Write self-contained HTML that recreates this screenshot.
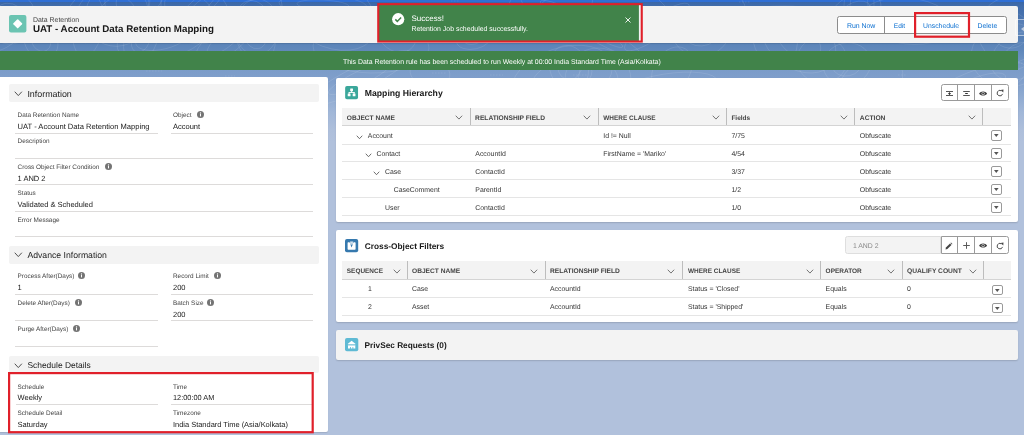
<!DOCTYPE html>
<html lang="en"><head><meta charset="utf-8"><title>UAT - Account Data Retention Mapping</title><style>
html,body{margin:0;padding:0}
body{width:1024px;height:435px;overflow:hidden;position:relative;font-family:"Liberation Sans",sans-serif;color:#181818;
background:linear-gradient(to bottom,#2f6fd6 0,#2f6fd6 1.8px,#3b67a7 2.2px,#416cab 6px,#5a83b8 42px,#6189bc 51px,#7b9cc9 70px,#809fcb 80px,#8eaad1 95px,#a1b7d8 112px,#aebfdb 130px,#b1c1dc 142px,#b1c1dc 100%);}
#app{position:absolute;left:0;top:0;width:1024px;height:435px;will-change:transform;text-rendering:geometricPrecision}
.t{position:absolute;white-space:pre;line-height:12px;height:12px}
.hl{position:absolute}
.ic{position:absolute;display:block;overflow:visible}
</style></head>
<body>
<div id="app">
<svg class="ic" style="left:0;top:0" width="1024" height="130" viewBox="0 0 1024 130"><g fill="none" stroke="rgba(255,255,255,.14)" stroke-width=".7"><ellipse cx="323" cy="5" rx="44" ry="10" transform="rotate(3 323 5)"/><ellipse cx="323" cy="5" rx="26" ry="5" transform="rotate(3 323 5)"/><ellipse cx="41" cy="41" rx="16" ry="19" transform="rotate(-34 41 41)"/><ellipse cx="41" cy="41" rx="9" ry="11" transform="rotate(-34 41 41)"/><ellipse cx="430" cy="73" rx="20" ry="14" transform="rotate(10 430 73)"/><ellipse cx="592" cy="30" rx="59" ry="9" transform="rotate(29 592 30)"/><ellipse cx="592" cy="30" rx="35" ry="5" transform="rotate(29 592 30)"/><ellipse cx="133" cy="2" rx="28" ry="29" transform="rotate(-26 133 2)"/><ellipse cx="133" cy="2" rx="17" ry="16" transform="rotate(-26 133 2)"/><ellipse cx="657" cy="27" rx="39" ry="10" transform="rotate(-35 657 27)"/><ellipse cx="657" cy="27" rx="24" ry="5" transform="rotate(-35 657 27)"/><ellipse cx="701" cy="33" rx="28" ry="23" transform="rotate(-4 701 33)"/><ellipse cx="701" cy="33" rx="17" ry="13" transform="rotate(-4 701 33)"/><ellipse cx="822" cy="60" rx="25" ry="23" transform="rotate(2 822 60)"/><ellipse cx="753" cy="19" rx="59" ry="11" transform="rotate(-7 753 19)"/><ellipse cx="141" cy="39" rx="16" ry="25" transform="rotate(21 141 39)"/><ellipse cx="141" cy="39" rx="9" ry="14" transform="rotate(21 141 39)"/><ellipse cx="908" cy="21" rx="46" ry="23" transform="rotate(6 908 21)"/><ellipse cx="908" cy="21" rx="28" ry="13" transform="rotate(6 908 21)"/><ellipse cx="870" cy="84" rx="36" ry="25" transform="rotate(-35 870 84)"/><ellipse cx="666" cy="89" rx="52" ry="15" transform="rotate(-9 666 89)"/><ellipse cx="4" cy="36" rx="22" ry="11" transform="rotate(-35 4 36)"/><ellipse cx="117" cy="15" rx="32" ry="31" transform="rotate(-34 117 15)"/><ellipse cx="117" cy="15" rx="19" ry="17" transform="rotate(-34 117 15)"/><ellipse cx="562" cy="78" rx="52" ry="30" transform="rotate(-18 562 78)"/><ellipse cx="562" cy="78" rx="31" ry="17" transform="rotate(-18 562 78)"/><ellipse cx="360" cy="78" rx="58" ry="12" transform="rotate(-26 360 78)"/><ellipse cx="360" cy="78" rx="35" ry="7" transform="rotate(-26 360 78)"/><ellipse cx="227" cy="38" rx="41" ry="15" transform="rotate(-40 227 38)"/><ellipse cx="227" cy="38" rx="25" ry="8" transform="rotate(-40 227 38)"/><ellipse cx="371" cy="47" rx="58" ry="26" transform="rotate(1 371 47)"/><ellipse cx="697" cy="-5" rx="55" ry="28" transform="rotate(30 697 -5)"/><ellipse cx="396" cy="30" rx="19" ry="24" transform="rotate(-35 396 30)"/><ellipse cx="396" cy="30" rx="11" ry="13" transform="rotate(-35 396 30)"/><ellipse cx="201" cy="6" rx="30" ry="9" transform="rotate(-40 201 6)"/><ellipse cx="201" cy="6" rx="18" ry="5" transform="rotate(-40 201 6)"/><ellipse cx="88" cy="26" rx="15" ry="31" transform="rotate(9 88 26)"/><ellipse cx="88" cy="26" rx="9" ry="17" transform="rotate(9 88 26)"/><ellipse cx="247" cy="25" rx="31" ry="11" transform="rotate(28 247 25)"/><ellipse cx="474" cy="38" rx="18" ry="11" transform="rotate(-13 474 38)"/><ellipse cx="474" cy="38" rx="11" ry="6" transform="rotate(-13 474 38)"/><ellipse cx="859" cy="6" rx="15" ry="33" transform="rotate(2 859 6)"/><ellipse cx="859" cy="6" rx="9" ry="18" transform="rotate(2 859 6)"/><ellipse cx="556" cy="-7" rx="38" ry="33" transform="rotate(29 556 -7)"/><ellipse cx="257" cy="27" rx="22" ry="28" transform="rotate(3 257 27)"/><ellipse cx="329" cy="12" rx="51" ry="34" transform="rotate(28 329 12)"/><ellipse cx="847" cy="64" rx="24" ry="21" transform="rotate(-12 847 64)"/><ellipse cx="847" cy="64" rx="15" ry="12" transform="rotate(-12 847 64)"/><ellipse cx="10" cy="18" rx="26" ry="26" transform="rotate(37 10 18)"/><ellipse cx="10" cy="18" rx="16" ry="14" transform="rotate(37 10 18)"/><ellipse cx="973" cy="89" rx="58" ry="17" transform="rotate(-22 973 89)"/><ellipse cx="973" cy="89" rx="35" ry="10" transform="rotate(-22 973 89)"/><ellipse cx="189" cy="10" rx="43" ry="31" transform="rotate(27 189 10)"/><ellipse cx="189" cy="10" rx="26" ry="17" transform="rotate(27 189 10)"/><ellipse cx="672" cy="70" rx="18" ry="25" transform="rotate(33 672 70)"/><ellipse cx="775" cy="38" rx="22" ry="29" transform="rotate(-13 775 38)"/><ellipse cx="1010" cy="30" rx="32" ry="33" transform="rotate(18 1010 30)"/><ellipse cx="1010" cy="30" rx="19" ry="18" transform="rotate(18 1010 30)"/><ellipse cx="115" cy="5" rx="56" ry="29" transform="rotate(-28 115 5)"/><ellipse cx="1019" cy="56" rx="30" ry="22" transform="rotate(-30 1019 56)"/><ellipse cx="1019" cy="56" rx="18" ry="12" transform="rotate(-30 1019 56)"/><ellipse cx="1009" cy="55" rx="38" ry="32" transform="rotate(-5 1009 55)"/><ellipse cx="856" cy="11" rx="26" ry="16" transform="rotate(-21 856 11)"/><ellipse cx="856" cy="11" rx="15" ry="9" transform="rotate(-21 856 11)"/><ellipse cx="255" cy="32" rx="20" ry="32" transform="rotate(-12 255 32)"/><ellipse cx="255" cy="32" rx="12" ry="17" transform="rotate(-12 255 32)"/><ellipse cx="598" cy="80" rx="33" ry="32" transform="rotate(0 598 80)"/><ellipse cx="598" cy="80" rx="20" ry="18" transform="rotate(0 598 80)"/><ellipse cx="535" cy="-8" rx="34" ry="13" transform="rotate(-40 535 -8)"/><ellipse cx="163" cy="37" rx="47" ry="22" transform="rotate(-14 163 37)"/><ellipse cx="163" cy="37" rx="28" ry="12" transform="rotate(-14 163 37)"/><ellipse cx="569" cy="68" rx="19" ry="23" transform="rotate(-20 569 68)"/><ellipse cx="569" cy="68" rx="11" ry="12" transform="rotate(-20 569 68)"/><ellipse cx="799" cy="41" rx="40" ry="28" transform="rotate(33 799 41)"/><ellipse cx="799" cy="41" rx="24" ry="15" transform="rotate(33 799 41)"/><path d="M627 40 h11" stroke-dasharray="1.5 1.5"/><path d="M709 36 h11" stroke-dasharray="1.5 1.5"/><path d="M490 75 h13" stroke-dasharray="1.5 1.5"/><path d="M898 75 h9" stroke-dasharray="1.5 1.5"/><path d="M573 75 h14" stroke-dasharray="1.5 1.5"/><path d="M140 10 h10" stroke-dasharray="1.5 1.5"/><path d="M74 19 h7" stroke-dasharray="1.5 1.5"/><path d="M686 63 h15" stroke-dasharray="1.5 1.5"/><path d="M158 57 h13" stroke-dasharray="1.5 1.5"/><path d="M146 71 h16" stroke-dasharray="1.5 1.5"/><path d="M225 76 h10" stroke-dasharray="1.5 1.5"/><path d="M499 79 h14" stroke-dasharray="1.5 1.5"/><path d="M165 35 h11" stroke-dasharray="1.5 1.5"/><path d="M347 16 h9" stroke-dasharray="1.5 1.5"/><path d="M739 2 h12" stroke-dasharray="1.5 1.5"/><path d="M451 1 h9" stroke-dasharray="1.5 1.5"/><path d="M639 41 h7" stroke-dasharray="1.5 1.5"/><path d="M1009 63 h16" stroke-dasharray="1.5 1.5"/><path d="M107 21 h6" stroke-dasharray="1.5 1.5"/><path d="M798 22 h7" stroke-dasharray="1.5 1.5"/><path d="M432 73 h14" stroke-dasharray="1.5 1.5"/><path d="M265 12 h15" stroke-dasharray="1.5 1.5"/><path d="M584 56 h7" stroke-dasharray="1.5 1.5"/><path d="M59 55 h10" stroke-dasharray="1.5 1.5"/></g></svg>
<header id="hdr">
<div class="" style="position:absolute;left:0.00px;top:6.00px;width:1018.00px;height:36.60px;background:#f3f3f3;border-radius:0 2px 2px 0;box-shadow:0 1px 1px rgba(0,0,0,.12);"></div>
<svg class="ic" style="left:8.8px;top:15px" width="17.4" height="17.4" viewBox="0 0 17.4 17.4"><rect width="17.4" height="17.4" rx="2" fill="#6bc4b2"/><rect x="-3.45" y="-3.45" width="6.9" height="6.9" rx="0.8" transform="translate(8.7 8.8) rotate(45)" fill="#fff"/></svg>
<div class="t" style="top:15px;font-size:6.93px;left:33.00px;color:#444444;">Data Retention</div>
<div class="t" style="top:24px;font-size:9.75px;left:33.00px;font-weight:700;">UAT - Account Data Retention Mapping</div>
<div class="" style="position:absolute;left:837.25px;top:16.25px;width:169.50px;height:17.25px;box-sizing:border-box;border:1px solid #8c8c8c;border-radius:2.5px;background:#fff;"></div>
<div class="hl" style="left:883.90px;top:16.75px;width:1px;height:16.25px;background:#8c8c8c"></div>
<div class="hl" style="left:914.10px;top:16.75px;width:1px;height:16.25px;background:#8c8c8c"></div>
<div class="hl" style="left:968.30px;top:16.75px;width:1px;height:16.25px;background:#8c8c8c"></div>
<div class="t" style="top:21px;font-size:6.93px;left:846.90px;color:#0b6fd0;">Run Now</div>
<div class="t" style="top:21px;font-size:6.6px;left:893.75px;color:#0b6fd0;">Edit</div>
<div class="t" style="top:21px;font-size:6.82px;left:923.10px;color:#0b6fd0;">Unschedule</div>
<div class="t" style="top:21px;font-size:6.83px;left:977.50px;color:#0b6fd0;">Delete</div>
<svg class="ic" style="left:913.60px;top:11.60px" width="56.10" height="25.80" viewBox="0 0 56.10 25.80"><rect x="1.10" y="1.10" width="53.90" height="23.60" fill="none" stroke="#e0202a" stroke-width="2.2"/></svg>
<div class="" style="position:absolute;left:1015.40px;top:19.20px;width:12.00px;height:16.40px;box-sizing:border-box;border:1px solid rgba(255,255,255,.5);border-radius:2px;background:rgba(255,255,255,.07);"></div>
<svg class="ic" style="left:1020.6px;top:25.6px" width="4" height="6" viewBox="0 0 4 6"><path d="M0 3 L4 0 V6 Z" fill="rgba(205,214,228,.85)"/></svg>
</header>
<section id="toast">
<svg class="ic" style="left:377px;top:3px" width="266" height="40" viewBox="0 0 266 40"><rect x="1" y="1" width="264" height="37.6" fill="#f3f3f3"/><rect x="1" y="1" width="260.9" height="37.6" fill="#41834a"/><rect x="1.25" y="1.15" width="263.5" height="37.4" fill="none" stroke="#e0202a" stroke-width="2.1"/></svg>
<svg class="ic" style="left:391.8px;top:12.6px" width="12.4" height="12.4" viewBox="0 0 12.4 12.4"><circle cx="6.2" cy="6.2" r="6.1" fill="#fff"/><path d="M3.3 6.4 L5.3 8.4 L9.1 4.4" fill="none" stroke="#41834a" stroke-width="1.5"/></svg>
<div class="t" style="top:13px;font-size:8.0px;left:411.40px;color:#fff;">Success!</div>
<div class="t" style="top:24px;font-size:6.92px;left:411.40px;color:#fff;">Retention Job scheduled successfully.</div>
<svg class="ic" style="left:625.4px;top:16.6px" width="6" height="6" viewBox="0 0 6 6"><path d="M0.5 0.5 L5.5 5.5 M5.5 0.5 L0.5 5.5" stroke="#fff" stroke-width="0.9" fill="none"/></svg>
</section>
<section id="banner">
<div class="" style="position:absolute;left:0.00px;top:51.25px;width:1018.00px;height:19.00px;background:#41834a;"></div>
<div class="t" style="top:57px;font-size:6.92px;left:343.00px;color:#fff;">This Data Retention rule has been scheduled to run Weekly at 00:00 India Standard Time (Asia/Kolkata)</div>
</section>
<aside id="left">
<div class="" style="position:absolute;left:0.00px;top:77.25px;width:328.30px;height:354.50px;background:#fff;border-radius:0 2px 2px 0;box-shadow:0 1px 1px rgba(0,0,0,.10);"></div>
<div class="" style="position:absolute;left:9.20px;top:84.20px;width:309.80px;height:17.60px;background:#f3f3f3;border-radius:2px;"></div>
<svg class="ic" style="left:14.20px;top:90.90px" width="8.60" height="5.60" viewBox="-1 -1 8.60 5.60"><path d="M0 0 L3.30 3.60 L6.60 0" fill="none" stroke="#505050" stroke-width="1.0" stroke-linecap="round" stroke-linejoin="round"/></svg>
<div class="t" style="top:88px;font-size:8.9px;left:27.40px;color:#222;">Information</div>
<div class="" style="position:absolute;left:9.20px;top:246.20px;width:309.80px;height:17.60px;background:#f3f3f3;border-radius:2px;"></div>
<svg class="ic" style="left:14.20px;top:252.30px" width="8.60" height="5.60" viewBox="-1 -1 8.60 5.60"><path d="M0 0 L3.30 3.60 L6.60 0" fill="none" stroke="#505050" stroke-width="1.0" stroke-linecap="round" stroke-linejoin="round"/></svg>
<div class="t" style="top:249px;font-size:8.68px;left:27.40px;color:#222;">Advance Information</div>
<div class="" style="position:absolute;left:9.20px;top:356.20px;width:309.80px;height:16.90px;background:#f3f3f3;border-radius:2px;"></div>
<svg class="ic" style="left:14.20px;top:362.80px" width="8.60" height="5.60" viewBox="-1 -1 8.60 5.60"><path d="M0 0 L3.30 3.60 L6.60 0" fill="none" stroke="#505050" stroke-width="1.0" stroke-linecap="round" stroke-linejoin="round"/></svg>
<div class="t" style="top:359px;font-size:8.45px;left:27.40px;color:#222;">Schedule Details</div>
<div class="t" style="top:110px;font-size:6.4px;left:17.60px;color:#444444;">Data Retention Name</div>
<div class="t" style="top:121px;font-size:7.58px;left:17.60px;">UAT - Account Data Retention Mapping</div>
<div class="hl" style="left:15.00px;top:133.00px;width:143.00px;height:1px;background:#dddbda"></div>
<div class="t" style="top:110px;font-size:6.4px;left:173.00px;color:#444444;">Object</div>
<svg class="ic" style="left:197.30px;top:111.10px" width="7.00" height="7.00" viewBox="0 0 20 20"><circle cx="10" cy="10" r="10" fill="#747474"/><rect x="8.6" y="8.2" width="2.8" height="7.2" fill="#fff"/><circle cx="10" cy="5.4" r="1.8" fill="#fff"/></svg>
<div class="t" style="top:121px;font-size:7.5px;left:173.00px;">Account</div>
<div class="hl" style="left:171.00px;top:133.00px;width:142.00px;height:1px;background:#dddbda"></div>
<div class="t" style="top:136px;font-size:6.4px;left:17.60px;color:#444444;">Description</div>
<div class="hl" style="left:15.00px;top:157.80px;width:298.00px;height:1px;background:#dddbda"></div>
<div class="t" style="top:162px;font-size:6.4px;left:17.60px;color:#444444;">Cross Object Filter Condition</div>
<svg class="ic" style="left:104.90px;top:162.50px" width="7.00" height="7.00" viewBox="0 0 20 20"><circle cx="10" cy="10" r="10" fill="#747474"/><rect x="8.6" y="8.2" width="2.8" height="7.2" fill="#fff"/><circle cx="10" cy="5.4" r="1.8" fill="#fff"/></svg>
<div class="t" style="top:173px;font-size:7.5px;left:17.60px;">1 AND 2</div>
<div class="hl" style="left:15.00px;top:183.80px;width:298.00px;height:1px;background:#dddbda"></div>
<div class="t" style="top:188px;font-size:6.4px;left:17.60px;color:#444444;">Status</div>
<div class="t" style="top:199px;font-size:7.5px;left:17.60px;">Validated &amp; Scheduled</div>
<div class="hl" style="left:15.00px;top:210.90px;width:298.00px;height:1px;background:#dddbda"></div>
<div class="t" style="top:215px;font-size:6.4px;left:17.60px;color:#444444;">Error Message</div>
<div class="hl" style="left:15.00px;top:236.00px;width:298.00px;height:1px;background:#dddbda"></div>
<div class="t" style="top:271px;font-size:6.4px;left:17.60px;color:#444444;">Process After(Days)</div>
<svg class="ic" style="left:78.00px;top:272.30px" width="7.00" height="7.00" viewBox="0 0 20 20"><circle cx="10" cy="10" r="10" fill="#747474"/><rect x="8.6" y="8.2" width="2.8" height="7.2" fill="#fff"/><circle cx="10" cy="5.4" r="1.8" fill="#fff"/></svg>
<div class="t" style="top:282px;font-size:7.5px;left:17.60px;">1</div>
<div class="hl" style="left:15.00px;top:293.60px;width:143.00px;height:1px;background:#dddbda"></div>
<div class="t" style="top:271px;font-size:6.4px;left:173.00px;color:#444444;">Record Limit</div>
<svg class="ic" style="left:214.00px;top:272.30px" width="7.00" height="7.00" viewBox="0 0 20 20"><circle cx="10" cy="10" r="10" fill="#747474"/><rect x="8.6" y="8.2" width="2.8" height="7.2" fill="#fff"/><circle cx="10" cy="5.4" r="1.8" fill="#fff"/></svg>
<div class="t" style="top:282px;font-size:7.5px;left:173.00px;">200</div>
<div class="hl" style="left:171.00px;top:293.60px;width:142.00px;height:1px;background:#dddbda"></div>
<div class="t" style="top:298px;font-size:6.4px;left:17.60px;color:#444444;">Delete After(Days)</div>
<svg class="ic" style="left:74.60px;top:298.70px" width="7.00" height="7.00" viewBox="0 0 20 20"><circle cx="10" cy="10" r="10" fill="#747474"/><rect x="8.6" y="8.2" width="2.8" height="7.2" fill="#fff"/><circle cx="10" cy="5.4" r="1.8" fill="#fff"/></svg>
<div class="hl" style="left:15.00px;top:319.80px;width:143.00px;height:1px;background:#dddbda"></div>
<div class="t" style="top:298px;font-size:6.4px;left:173.00px;color:#444444;">Batch Size</div>
<svg class="ic" style="left:207.00px;top:298.70px" width="7.00" height="7.00" viewBox="0 0 20 20"><circle cx="10" cy="10" r="10" fill="#747474"/><rect x="8.6" y="8.2" width="2.8" height="7.2" fill="#fff"/><circle cx="10" cy="5.4" r="1.8" fill="#fff"/></svg>
<div class="t" style="top:309px;font-size:7.5px;left:173.00px;">200</div>
<div class="hl" style="left:171.00px;top:319.80px;width:142.00px;height:1px;background:#dddbda"></div>
<div class="t" style="top:324px;font-size:6.4px;left:17.60px;color:#444444;">Purge After(Days)</div>
<svg class="ic" style="left:72.90px;top:324.70px" width="7.00" height="7.00" viewBox="0 0 20 20"><circle cx="10" cy="10" r="10" fill="#747474"/><rect x="8.6" y="8.2" width="2.8" height="7.2" fill="#fff"/><circle cx="10" cy="5.4" r="1.8" fill="#fff"/></svg>
<div class="hl" style="left:15.00px;top:345.70px;width:143.00px;height:1px;background:#dddbda"></div>
<div class="t" style="top:382px;font-size:6.4px;left:17.60px;color:#444444;">Schedule</div>
<div class="t" style="top:392px;font-size:7.5px;left:17.60px;">Weekly</div>
<div class="hl" style="left:15.80px;top:404.10px;width:141.80px;height:1px;background:#dddbda"></div>
<div class="t" style="top:382px;font-size:6.4px;left:173.00px;color:#444444;">Time</div>
<div class="t" style="top:392px;font-size:7.39px;left:173.00px;">12:00:00 AM</div>
<div class="hl" style="left:171.00px;top:404.10px;width:142.00px;height:1px;background:#dddbda"></div>
<div class="t" style="top:408px;font-size:6.4px;left:17.60px;color:#444444;">Schedule Detail</div>
<div class="t" style="top:419px;font-size:7.5px;left:17.60px;">Saturday</div>
<div class="t" style="top:408px;font-size:6.4px;left:173.00px;color:#444444;">Timezone</div>
<div class="t" style="top:419px;font-size:7.44px;left:173.00px;">India Standard Time (Asia/Kolkata)</div>
<svg class="ic" style="left:7.50px;top:372.30px" width="305.80" height="61.30" viewBox="0 0 305.80 61.30"><rect x="1.10" y="1.10" width="303.60" height="59.10" fill="none" stroke="#e0202a" stroke-width="2.2"/></svg>
</aside>
<section id="mapping">
<div class="" style="position:absolute;left:336.00px;top:77.50px;width:682.00px;height:144.60px;background:#fff;border-radius:2px;box-shadow:0 1px 1.5px rgba(0,0,0,.15);"></div>
<svg class="ic" style="left:344.6px;top:86px" width="13.2" height="13.2" viewBox="0 0 13 13.3"><rect width="13" height="13.3" rx="1.8" fill="#3ba79b"/><g fill="#fff"><rect x="5.1" y="2.6" width="2.8" height="2.6" rx=".3"/><rect x="2.6" y="7.6" width="2.8" height="2.8" rx=".3"/><rect x="7.6" y="7.6" width="2.8" height="2.8" rx=".3"/><rect x="6.1" y="5" width=".9" height="1.6"/><rect x="3.6" y="6.1" width="5.9" height=".9"/><rect x="3.6" y="6.1" width=".9" height="1.8"/><rect x="8.6" y="6.1" width=".9" height="1.8"/></g></svg>
<div class="t" style="top:87px;font-size:8.66px;left:364.80px;font-weight:700;">Mapping Hierarchy</div>
<div class="" style="position:absolute;left:941.00px;top:84.10px;width:67.80px;height:17.30px;box-sizing:border-box;border:1px solid #9a9a9a;border-radius:2.5px;background:#fff;"></div><div class="hl" style="left:957.00px;top:84.60px;width:1px;height:16.30px;background:#9a9a9a"></div><div class="hl" style="left:974.00px;top:84.60px;width:1px;height:16.30px;background:#9a9a9a"></div><div class="hl" style="left:991.00px;top:84.60px;width:1px;height:16.30px;background:#9a9a9a"></div><svg class="ic" style="left:945px;top:89px" width="9" height="9" viewBox="0 0 9 9"><path d="M1 2.5 H8 M1 6.5 H8" stroke="#555" stroke-width="1"/><path d="M4.5 3.3 V5.9 M3.2 4.6 H5.8" stroke="#333" stroke-width="0.95"/></svg><svg class="ic" style="left:962px;top:89px" width="9" height="9" viewBox="0 0 9 9"><path d="M1.2 2.5 H7.8 M1.2 6.5 H7.8" stroke="#555" stroke-width="1"/><path d="M3.2 4.5 H5.8" stroke="#333" stroke-width="1"/></svg><svg class="ic" style="left:979.10px;top:90.70px" width="8.2" height="5" viewBox="0 0 8.2 5"><path d="M0.1 2.5 C1.5 -0.3 6.7 -0.3 8.1 2.5 C6.7 5.3 1.5 5.3 0.1 2.5 Z" fill="#3e3e3e"/><circle cx="4.1" cy="2.5" r="1.55" fill="#e8e8e8"/><circle cx="4.1" cy="2.5" r="0.95" fill="#3e3e3e"/></svg><svg class="ic" style="left:996.00px;top:89.20px" width="8" height="8" viewBox="0 0 8 8"><path d="M5.3 1.75 A2.75 2.75 0 1 0 6.55 4.9" fill="none" stroke="#444" stroke-width="0.95"/><path d="M4.6 0.9 L7.5 0.6 L7.3 3.6 Z" fill="#444"/></svg>
<div class="" style="position:absolute;left:342.10px;top:108.00px;width:668.90px;height:17.50px;background:#f3f3f3;"></div>
<div class="hl" style="left:342.10px;top:125.00px;width:668.90px;height:1.2px;background:#d4d4d4"></div>
<div class="hl" style="left:469.90px;top:108.00px;width:1px;height:17.40px;background:#bdbdbd"></div>
<div class="hl" style="left:598.10px;top:108.00px;width:1px;height:17.40px;background:#bdbdbd"></div>
<div class="hl" style="left:725.80px;top:108.00px;width:1px;height:17.40px;background:#bdbdbd"></div>
<div class="hl" style="left:853.90px;top:108.00px;width:1px;height:17.40px;background:#bdbdbd"></div>
<div class="hl" style="left:982.00px;top:108.00px;width:1px;height:17.40px;background:#bdbdbd"></div>
<div class="t" style="top:113px;font-size:6.62px;left:346.80px;font-weight:700;color:#444444;">OBJECT NAME</div>
<div class="t" style="top:113px;font-size:6.65px;left:475.10px;font-weight:700;color:#444444;">RELATIONSHIP FIELD</div>
<div class="t" style="top:113px;font-size:6.45px;left:603.30px;font-weight:700;color:#444444;">WHERE CLAUSE</div>
<div class="t" style="top:113px;font-size:6.51px;left:731.40px;font-weight:700;color:#444444;">Fields</div>
<div class="t" style="top:113px;font-size:6.7px;left:859.80px;font-weight:700;color:#444444;">ACTION</div>
<svg class="ic" style="left:455.45px;top:115.15px" width="7.90" height="5.10" viewBox="-1 -1 7.90 5.10"><path d="M0 0 L2.95 3.10 L5.90 0" fill="none" stroke="#666" stroke-width="0.9" stroke-linecap="round" stroke-linejoin="round"/></svg>
<svg class="ic" style="left:583.35px;top:115.15px" width="7.90" height="5.10" viewBox="-1 -1 7.90 5.10"><path d="M0 0 L2.95 3.10 L5.90 0" fill="none" stroke="#666" stroke-width="0.9" stroke-linecap="round" stroke-linejoin="round"/></svg>
<svg class="ic" style="left:711.85px;top:115.15px" width="7.90" height="5.10" viewBox="-1 -1 7.90 5.10"><path d="M0 0 L2.95 3.10 L5.90 0" fill="none" stroke="#666" stroke-width="0.9" stroke-linecap="round" stroke-linejoin="round"/></svg>
<svg class="ic" style="left:839.85px;top:115.15px" width="7.90" height="5.10" viewBox="-1 -1 7.90 5.10"><path d="M0 0 L2.95 3.10 L5.90 0" fill="none" stroke="#666" stroke-width="0.9" stroke-linecap="round" stroke-linejoin="round"/></svg>
<svg class="ic" style="left:967.95px;top:115.15px" width="7.90" height="5.10" viewBox="-1 -1 7.90 5.10"><path d="M0 0 L2.95 3.10 L5.90 0" fill="none" stroke="#666" stroke-width="0.9" stroke-linecap="round" stroke-linejoin="round"/></svg>
<svg class="ic" style="left:356.30px;top:134.55px" width="7.00" height="4.70" viewBox="-1 -1 7.00 4.70"><path d="M0 0 L2.50 2.70 L5.00 0" fill="none" stroke="#555" stroke-width="0.85" stroke-linecap="round" stroke-linejoin="round"/></svg>
<div class="t" style="top:131px;font-size:6.9px;left:367.80px;color:#333333;">Account</div>
<div class="t" style="top:131px;font-size:6.9px;left:603.30px;color:#333333;">Id != Null</div>
<div class="t" style="top:131px;font-size:6.9px;left:731.40px;color:#333333;">7/75</div>
<div class="t" style="top:131px;font-size:6.9px;left:859.80px;color:#333333;">Obfuscate</div>
<div class="hl" style="left:342.10px;top:143.80px;width:668.90px;height:1px;background:#e5e5e5"></div>
<div class="" style="position:absolute;left:991.00px;top:130.40px;width:11.00px;height:10.50px;box-sizing:border-box;border:1px solid #9a9a9a;border-radius:2px;background:#fff;"></div><svg class="ic" style="left:994.20px;top:134.30px" width="4.6" height="3" viewBox="0 0 4.6 3"><path d="M0 0 H4.6 L2.3 3 Z" fill="#555"/></svg>
<svg class="ic" style="left:364.50px;top:152.55px" width="7.00" height="4.70" viewBox="-1 -1 7.00 4.70"><path d="M0 0 L2.50 2.70 L5.00 0" fill="none" stroke="#555" stroke-width="0.85" stroke-linecap="round" stroke-linejoin="round"/></svg>
<div class="t" style="top:149px;font-size:6.9px;left:376.50px;color:#333333;">Contact</div>
<div class="t" style="top:149px;font-size:6.9px;left:475.30px;color:#333333;">AccountId</div>
<div class="t" style="top:149px;font-size:6.9px;left:603.30px;color:#333333;">FirstName = 'Mariko'</div>
<div class="t" style="top:149px;font-size:6.9px;left:731.40px;color:#333333;">4/54</div>
<div class="t" style="top:149px;font-size:6.9px;left:859.80px;color:#333333;">Obfuscate</div>
<div class="hl" style="left:342.10px;top:161.10px;width:668.90px;height:1px;background:#e5e5e5"></div>
<div class="" style="position:absolute;left:991.00px;top:148.30px;width:11.00px;height:10.50px;box-sizing:border-box;border:1px solid #9a9a9a;border-radius:2px;background:#fff;"></div><svg class="ic" style="left:994.20px;top:152.20px" width="4.6" height="3" viewBox="0 0 4.6 3"><path d="M0 0 H4.6 L2.3 3 Z" fill="#555"/></svg>
<svg class="ic" style="left:373.40px;top:170.55px" width="7.00" height="4.70" viewBox="-1 -1 7.00 4.70"><path d="M0 0 L2.50 2.70 L5.00 0" fill="none" stroke="#555" stroke-width="0.85" stroke-linecap="round" stroke-linejoin="round"/></svg>
<div class="t" style="top:167px;font-size:6.9px;left:385.00px;color:#333333;">Case</div>
<div class="t" style="top:167px;font-size:6.9px;left:475.30px;color:#333333;">ContactId</div>
<div class="t" style="top:167px;font-size:6.9px;left:731.40px;color:#333333;">3/37</div>
<div class="t" style="top:167px;font-size:6.9px;left:859.80px;color:#333333;">Obfuscate</div>
<div class="hl" style="left:342.10px;top:179.10px;width:668.90px;height:1px;background:#e5e5e5"></div>
<div class="" style="position:absolute;left:991.00px;top:166.20px;width:11.00px;height:10.50px;box-sizing:border-box;border:1px solid #9a9a9a;border-radius:2px;background:#fff;"></div><svg class="ic" style="left:994.20px;top:170.10px" width="4.6" height="3" viewBox="0 0 4.6 3"><path d="M0 0 H4.6 L2.3 3 Z" fill="#555"/></svg>
<div class="t" style="top:185px;font-size:6.9px;left:393.70px;color:#333333;">CaseComment</div>
<div class="t" style="top:185px;font-size:6.9px;left:475.30px;color:#333333;">ParentId</div>
<div class="t" style="top:185px;font-size:6.9px;left:731.40px;color:#333333;">1/2</div>
<div class="t" style="top:185px;font-size:6.9px;left:859.80px;color:#333333;">Obfuscate</div>
<div class="hl" style="left:342.10px;top:197.10px;width:668.90px;height:1px;background:#e5e5e5"></div>
<div class="" style="position:absolute;left:991.00px;top:184.10px;width:11.00px;height:10.50px;box-sizing:border-box;border:1px solid #9a9a9a;border-radius:2px;background:#fff;"></div><svg class="ic" style="left:994.20px;top:188.00px" width="4.6" height="3" viewBox="0 0 4.6 3"><path d="M0 0 H4.6 L2.3 3 Z" fill="#555"/></svg>
<div class="t" style="top:203px;font-size:6.9px;left:385.00px;color:#333333;">User</div>
<div class="t" style="top:203px;font-size:6.9px;left:475.30px;color:#333333;">ContactId</div>
<div class="t" style="top:203px;font-size:6.9px;left:731.40px;color:#333333;">1/0</div>
<div class="t" style="top:203px;font-size:6.9px;left:859.80px;color:#333333;">Obfuscate</div>
<div class="hl" style="left:342.10px;top:214.90px;width:668.90px;height:1px;background:#e5e5e5"></div>
<div class="" style="position:absolute;left:991.00px;top:202.00px;width:11.00px;height:10.50px;box-sizing:border-box;border:1px solid #9a9a9a;border-radius:2px;background:#fff;"></div><svg class="ic" style="left:994.20px;top:205.90px" width="4.6" height="3" viewBox="0 0 4.6 3"><path d="M0 0 H4.6 L2.3 3 Z" fill="#555"/></svg>
</section>
<section id="filters">
<div class="" style="position:absolute;left:336.00px;top:230.10px;width:682.00px;height:92.20px;background:#fff;border-radius:2px;box-shadow:0 1px 1.5px rgba(0,0,0,.15);"></div>
<svg class="ic" style="left:344.6px;top:239px" width="13.2" height="13.2" viewBox="0 0 13.2 13.2"><rect width="13.2" height="13.2" rx="1.9" fill="#3679ae"/><rect x="2.6" y="3.3" width="8" height="7.4" rx=".6" fill="#fff"/><rect x="4.9" y="2.3" width="3.4" height="1.8" rx=".5" fill="#fff" stroke="#3679ae" stroke-width=".55"/><path d="M5.1 5.6 H8.1 L7 6.9 V8.3 L6.2 7.9 V6.9 Z" fill="#3679ae"/></svg>
<div class="t" style="top:240px;font-size:8.3px;left:364.80px;font-weight:700;">Cross-Object Filters</div>
<div class="" style="position:absolute;left:845.40px;top:236.40px;width:95.60px;height:17.50px;box-sizing:border-box;border:1px solid #dedede;border-radius:2.5px 0 0 2.5px;background:#f3f3f3;"></div>
<div class="t" style="top:241px;font-size:6.9px;left:852.90px;color:#8a8a8a;">1 AND 2</div>
<div class="" style="position:absolute;left:941.00px;top:236.40px;width:67.80px;height:17.50px;box-sizing:border-box;border:1px solid #9a9a9a;border-radius:0 2.5px 2.5px 0;background:#fff;"></div><div class="hl" style="left:957.00px;top:236.90px;width:1px;height:16.50px;background:#9a9a9a"></div><div class="hl" style="left:974.00px;top:236.90px;width:1px;height:16.50px;background:#9a9a9a"></div><div class="hl" style="left:991.00px;top:236.90px;width:1px;height:16.50px;background:#9a9a9a"></div><svg class="ic" style="left:945.40px;top:241.60px" width="8" height="8" viewBox="0 0 8 8"><path d="M0.5 7.4 L0.95 5.5 L5.0 1.45 L6.45 2.9 L2.4 6.95 Z" fill="#444"/><path d="M5.45 1.0 L6.0 0.45 L7.45 1.9 L6.9 2.45 Z" fill="#444"/></svg><svg class="ic" style="left:962px;top:241px" width="9" height="9" viewBox="0 0 9 9"><path d="M4.5 1.2 V7.8 M1.2 4.5 H7.8" stroke="#5a5a5a" stroke-width="1"/></svg><svg class="ic" style="left:979.20px;top:243.10px" width="8.2" height="5" viewBox="0 0 8.2 5"><path d="M0.1 2.5 C1.5 -0.3 6.7 -0.3 8.1 2.5 C6.7 5.3 1.5 5.3 0.1 2.5 Z" fill="#3e3e3e"/><circle cx="4.1" cy="2.5" r="1.55" fill="#e8e8e8"/><circle cx="4.1" cy="2.5" r="0.95" fill="#3e3e3e"/></svg><svg class="ic" style="left:996.20px;top:241.60px" width="8" height="8" viewBox="0 0 8 8"><path d="M5.3 1.75 A2.75 2.75 0 1 0 6.55 4.9" fill="none" stroke="#444" stroke-width="0.95"/><path d="M4.6 0.9 L7.5 0.6 L7.3 3.6 Z" fill="#444"/></svg>
<div class="" style="position:absolute;left:342.10px;top:261.40px;width:668.90px;height:17.70px;background:#f3f3f3;"></div>
<div class="hl" style="left:342.10px;top:278.60px;width:668.90px;height:1.2px;background:#d4d4d4"></div>
<div class="hl" style="left:407.10px;top:261.40px;width:1px;height:17.60px;background:#bdbdbd"></div>
<div class="hl" style="left:544.50px;top:261.40px;width:1px;height:17.60px;background:#bdbdbd"></div>
<div class="hl" style="left:682.10px;top:261.40px;width:1px;height:17.60px;background:#bdbdbd"></div>
<div class="hl" style="left:820.20px;top:261.40px;width:1px;height:17.60px;background:#bdbdbd"></div>
<div class="hl" style="left:901.80px;top:261.40px;width:1px;height:17.60px;background:#bdbdbd"></div>
<div class="hl" style="left:982.80px;top:261.40px;width:1px;height:17.60px;background:#bdbdbd"></div>
<div class="t" style="top:266px;font-size:6.45px;left:346.80px;font-weight:700;color:#444444;">SEQUENCE</div>
<div class="t" style="top:266px;font-size:6.62px;left:412.00px;font-weight:700;color:#444444;">OBJECT NAME</div>
<div class="t" style="top:266px;font-size:6.65px;left:550.00px;font-weight:700;color:#444444;">RELATIONSHIP FIELD</div>
<div class="t" style="top:266px;font-size:6.45px;left:688.00px;font-weight:700;color:#444444;">WHERE CLAUSE</div>
<div class="t" style="top:266px;font-size:6.49px;left:825.60px;font-weight:700;color:#444444;">OPERATOR</div>
<div class="t" style="top:266px;font-size:6.7px;left:907.00px;font-weight:700;color:#444444;">QUALIFY COUNT</div>
<svg class="ic" style="left:392.75px;top:268.65px" width="7.90" height="5.10" viewBox="-1 -1 7.90 5.10"><path d="M0 0 L2.95 3.10 L5.90 0" fill="none" stroke="#666" stroke-width="0.9" stroke-linecap="round" stroke-linejoin="round"/></svg>
<svg class="ic" style="left:530.45px;top:268.65px" width="7.90" height="5.10" viewBox="-1 -1 7.90 5.10"><path d="M0 0 L2.95 3.10 L5.90 0" fill="none" stroke="#666" stroke-width="0.9" stroke-linecap="round" stroke-linejoin="round"/></svg>
<svg class="ic" style="left:666.55px;top:268.65px" width="7.90" height="5.10" viewBox="-1 -1 7.90 5.10"><path d="M0 0 L2.95 3.10 L5.90 0" fill="none" stroke="#666" stroke-width="0.9" stroke-linecap="round" stroke-linejoin="round"/></svg>
<svg class="ic" style="left:806.35px;top:268.65px" width="7.90" height="5.10" viewBox="-1 -1 7.90 5.10"><path d="M0 0 L2.95 3.10 L5.90 0" fill="none" stroke="#666" stroke-width="0.9" stroke-linecap="round" stroke-linejoin="round"/></svg>
<svg class="ic" style="left:887.35px;top:268.65px" width="7.90" height="5.10" viewBox="-1 -1 7.90 5.10"><path d="M0 0 L2.95 3.10 L5.90 0" fill="none" stroke="#666" stroke-width="0.9" stroke-linecap="round" stroke-linejoin="round"/></svg>
<svg class="ic" style="left:968.85px;top:268.65px" width="7.90" height="5.10" viewBox="-1 -1 7.90 5.10"><path d="M0 0 L2.95 3.10 L5.90 0" fill="none" stroke="#666" stroke-width="0.9" stroke-linecap="round" stroke-linejoin="round"/></svg>
<div class="t" style="top:284px;font-size:6.9px;left:367.90px;color:#333333;">1</div>
<div class="t" style="top:284px;font-size:6.9px;left:412.00px;color:#333333;">Case</div>
<div class="t" style="top:284px;font-size:6.9px;left:550.00px;color:#333333;">AccountId</div>
<div class="t" style="top:284px;font-size:6.9px;left:688.00px;color:#333333;">Status = 'Closed'</div>
<div class="t" style="top:284px;font-size:6.9px;left:825.60px;color:#333333;">Equals</div>
<div class="t" style="top:284px;font-size:6.9px;left:907.00px;color:#333333;">0</div>
<div class="hl" style="left:342.10px;top:296.90px;width:668.90px;height:1px;background:#e5e5e5"></div>
<div class="" style="position:absolute;left:991.70px;top:284.80px;width:11.00px;height:10.50px;box-sizing:border-box;border:1px solid #9a9a9a;border-radius:2px;background:#fff;"></div><svg class="ic" style="left:994.90px;top:288.70px" width="4.6" height="3" viewBox="0 0 4.6 3"><path d="M0 0 H4.6 L2.3 3 Z" fill="#555"/></svg>
<div class="t" style="top:302px;font-size:6.9px;left:367.90px;color:#333333;">2</div>
<div class="t" style="top:302px;font-size:6.9px;left:412.00px;color:#333333;">Asset</div>
<div class="t" style="top:302px;font-size:6.9px;left:550.00px;color:#333333;">AccountId</div>
<div class="t" style="top:302px;font-size:6.9px;left:688.00px;color:#333333;">Status = 'Shipped'</div>
<div class="t" style="top:302px;font-size:6.9px;left:825.60px;color:#333333;">Equals</div>
<div class="t" style="top:302px;font-size:6.9px;left:907.00px;color:#333333;">0</div>
<div class="hl" style="left:342.10px;top:315.10px;width:668.90px;height:1px;background:#e5e5e5"></div>
<div class="" style="position:absolute;left:991.70px;top:302.80px;width:11.00px;height:10.50px;box-sizing:border-box;border:1px solid #9a9a9a;border-radius:2px;background:#fff;"></div><svg class="ic" style="left:994.90px;top:306.70px" width="4.6" height="3" viewBox="0 0 4.6 3"><path d="M0 0 H4.6 L2.3 3 Z" fill="#555"/></svg>
</section>
<section id="privsec">
<div class="" style="position:absolute;left:336.00px;top:330.10px;width:682.00px;height:30.00px;background:#f3f3f3;border-radius:2px;box-shadow:0 1px 1.5px rgba(0,0,0,.15);"></div>
<svg class="ic" style="left:344.5px;top:338.2px" width="13.3" height="13.2" viewBox="0 0 13.3 13.2"><rect width="13.3" height="13.2" rx="1.9" fill="#5fbad4"/><path d="M6.65 2.7 L10.7 6.1 H2.6 Z" fill="#fff"/><rect x="2.9" y="6.7" width="7.5" height=".9" fill="#fff"/><path d="M3 7.9 H10.3 V10.4 H8.3 V9.1 H7.5 V10.4 H5.8 V9.1 H5 V10.4 H3 Z" fill="#fff"/></svg>
<div class="t" style="top:340px;font-size:8.25px;left:364.60px;font-weight:700;">PrivSec Requests (0)</div>
</section>
</div>
</body></html>
